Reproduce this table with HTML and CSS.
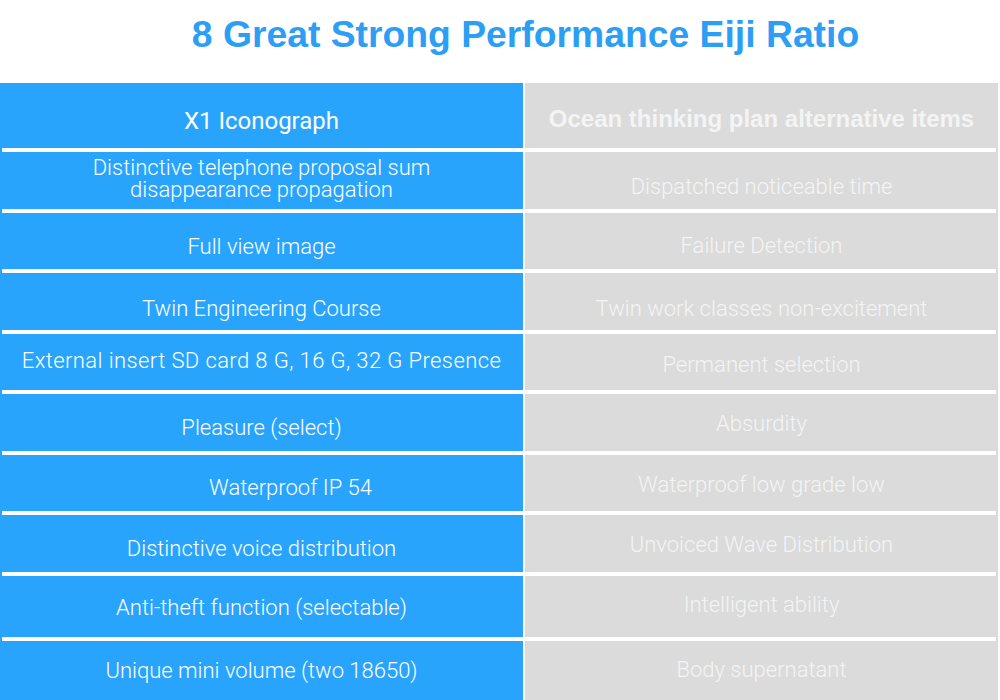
FILE: index.html
```html
<!DOCTYPE html>
<html lang="en">
<head>
<meta charset="utf-8">
<title>8 Great Strong Performance Eiji Ratio</title>
<link rel="stylesheet" href="styles.css">
</head>
<body>
<h1 class="title">8 Great Strong Performance Eiji Ratio</h1>
<div class="table">
  <div class="row head">
    <div class="cell left d5">X1 Iconograph</div>
    <div class="cell right bold d3">Ocean thinking plan alternative items</div>
  </div>
  <div class="sep"></div>
  <div class="row r57">
    <div class="cell left two d-2">Distinctive telephone proposal sum<br>disappearance propagation</div>
    <div class="cell right d6">Dispatched noticeable time</div>
  </div>
  <div class="sep"></div>
  <div class="row r56">
    <div class="cell left d6">Full view image</div>
    <div class="cell right d5">Failure Detection</div>
  </div>
  <div class="sep"></div>
  <div class="row r57">
    <div class="cell left d7">Twin Engineering Course</div>
    <div class="cell right d7">Twin work classes non-excitement</div>
  </div>
  <div class="sep"></div>
  <div class="row r56">
    <div class="cell left d-1 wide">External insert SD card 8 G, 16 G, 32 G Presence</div>
    <div class="cell right d3">Permanent selection</div>
  </div>
  <div class="sep"></div>
  <div class="row r57">
    <div class="cell left d5">Pleasure (select)</div>
    <div class="cell right d1">Absurdity</div>
  </div>
  <div class="sep"></div>
  <div class="row r56">
    <div class="cell left d5 shift">Waterproof IP 54</div>
    <div class="cell right d2">Waterproof low grade low</div>
  </div>
  <div class="sep"></div>
  <div class="row r57">
    <div class="cell left d5">Distinctive voice distribution</div>
    <div class="cell right d1">Unvoiced Wave Distribution</div>
  </div>
  <div class="sep"></div>
  <div class="row r61">
    <div class="cell left d1">Anti-theft function (selectable)</div>
    <div class="cell right d-2">Intelligent ability</div>
  </div>
  <div class="sep"></div>
  <div class="row r60">
    <div class="cell left">Unique mini volume (two 18650)</div>
    <div class="cell right d-1">Body supernatant</div>
  </div>
</div>
</body>
</html>
```

FILE: styles.css
```css
html, body {
  margin: 0;
  padding: 0;
  background: #ffffff;
  overflow: hidden;
}

body {
  width: 1000px;
  height: 700px;
  font-family: Roboto, "Liberation Sans", Arial, sans-serif;
}

.title {
  margin: 0;
  height: 83px;
  box-sizing: border-box;
  padding-top: 16px;
  padding-left: 51px;
  font-family: "Liberation Sans", Arial, sans-serif;
  font-weight: 700;
  font-size: 37.3px;
  line-height: 37px;
  color: #2c9ef4;
  text-align: center;
}

.table {
  width: 998px;
  background: linear-gradient(to right, #29a4fd 0, #29a4fd 523px, #ffffff 523px, #ffffff 525px, #dbdbdb 525px, #dbdbdb 998px);
}

.row {
  display: grid;
  grid-template-columns: 523px 473px;
  column-gap: 2px;
}

.head { height: 65px; }
.r56 { height: 56px; }
.r57 { height: 57px; }
.r60 { height: 60px; }
.r61 { height: 61px; }

.sep {
  height: 4px;
  margin: 0 2px;
  background: #ffffff;
}

.cell {
  display: flex;
  align-items: center;
  justify-content: center;
  text-align: center;
  box-sizing: border-box;
  font-size: 22px;
  font-weight: 300;
  line-height: 24px;
  white-space: nowrap;
}

.left { color: #ffffff; }
.right { color: #f4f4f4; }

.head .cell {
  font-size: 24px;
  font-weight: 400;
}

.head .bold {
  font-family: "Liberation Sans", Arial, sans-serif;
  font-weight: 700;
}

.two { line-height: 22px; }

.wide { letter-spacing: 0.4px; }

.shift { padding-left: 58px; }

.d-2 { padding-bottom: 4px; }
.d-1 { padding-bottom: 2px; }
.d1 { padding-top: 2px; }
.d2 { padding-top: 4px; }
.d3 { padding-top: 6px; }
.d5 { padding-top: 10px; }
.d6 { padding-top: 12px; }
.d7 { padding-top: 14px; }
```
